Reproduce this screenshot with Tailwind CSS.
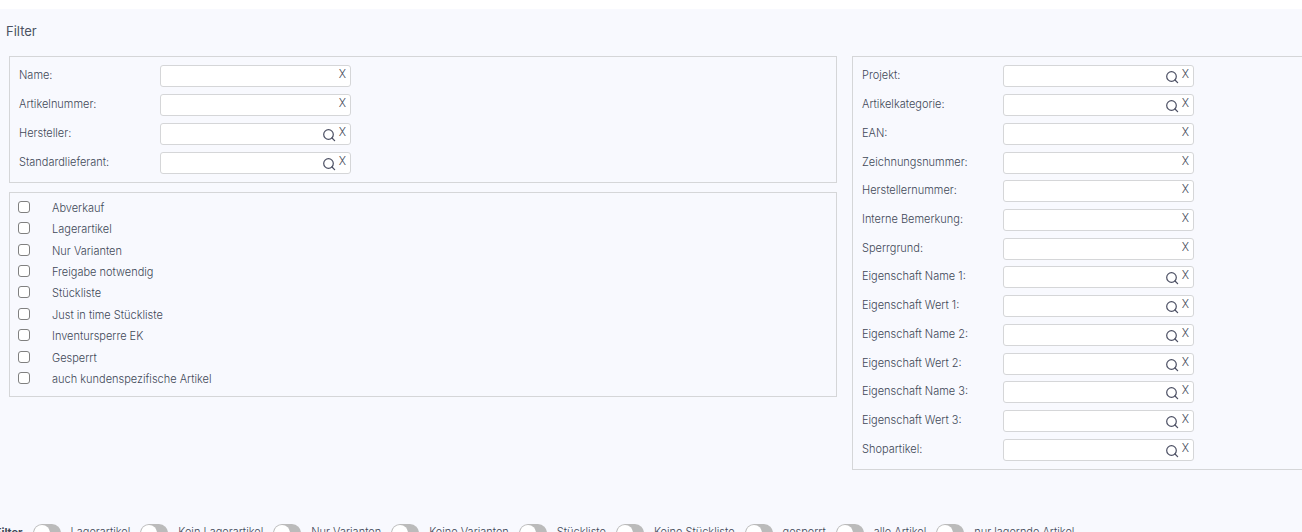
<!DOCTYPE html>
<html lang="de">
  <head>
    <meta charset="UTF-8" />
    <meta name="viewport" content="width=device-width, initial-scale=1.0" />
    <title>Filter</title>
    <script src="https://cdn.jsdelivr.net/npm/@tailwindcss/browser@4"></script>
  </head>
  <body class="h-screen overflow-hidden bg-white pt-[9px] font-['Inter',sans-serif] text-[11px] leading-4 font-light text-[#414857]">
    <svg class="hidden">
      <symbol id="search" viewBox="0 0 14 14">
        <circle cx="6.5" cy="6.5" r="4.8" fill="none" stroke="#4b4f63" stroke-width="1.2" />
        <path d="M10 10l2.6 2.6" fill="none" stroke="#4b4f63" stroke-width="1.3" stroke-linecap="round" />
      </symbol>
    </svg>

    <main class="min-h-full bg-[#f8f9fe]">
      <h1 class="px-[6px] pt-3 pb-[15px] text-[13px] leading-5 font-normal text-[#4b5362]">Filter</h1>

      <div class="flex items-start gap-[15px] pl-[9px]">
        <div class="flex grow flex-col gap-[9px]">
          <section id="leftFields" class="flex min-h-[127px] flex-col border border-[#d5d6d8] px-[9px] py-[5px]"></section>
          <section id="checks" class="flex min-h-[205px] flex-col border border-[#d5d6d8] px-2 pt-1 pb-[6px]"></section>
        </div>
        <section id="rightFields" class="flex min-h-[414px] w-[450px] shrink-0 flex-col border border-r-0 border-[#d5d6d8] px-[9px] py-[5px]"></section>
      </div>

      <div id="toggles" class="flex items-center gap-[10px] pt-[54px] whitespace-nowrap">
        <strong class="-ml-[5px] pb-[2px] font-bold">Filter</strong>
      </div>
    </main>

    <script>
      // [label, has search icon]
      const leftFields = [
        ["Name:", false],
        ["Artikelnummer:", false],
        ["Hersteller:", true],
        ["Standardlieferant:", true],
      ];
      const rightFields = [
        ["Projekt:", true],
        ["Artikelkategorie:", true],
        ["EAN:", false],
        ["Zeichnungsnummer:", false],
        ["Herstellernummer:", false],
        ["Interne Bemerkung:", false],
        ["Sperrgrund:", false],
        ["Eigenschaft Name 1:", true],
        ["Eigenschaft Wert 1:", true],
        ["Eigenschaft Name 2:", true],
        ["Eigenschaft Wert 2:", true],
        ["Eigenschaft Name 3:", true],
        ["Eigenschaft Wert 3:", true],
        ["Shopartikel:", true],
      ];
      const checks = [
        "Abverkauf",
        "Lagerartikel",
        "Nur Varianten",
        "Freigabe notwendig",
        "Stückliste",
        "Just in time Stückliste",
        "Inventursperre EK",
        "Gesperrt",
        "auch kundenspezifische Artikel",
      ];
      const toggles = [
        "Lagerartikel",
        "Kein Lagerartikel",
        "Nur Varianten",
        "Keine Varianten",
        "Stückliste",
        "Keine Stückliste",
        "gesperrt",
        "alle Artikel",
        "nur lagernde Artikel",
      ];

      function renderFields(id, fields) {
        document.querySelector("#" + id).innerHTML = fields
          .map(
            ([label, search], i) => `
            <div class="flex flex-1 items-center">
              <label for="${id}${i}" class="w-[141px] pb-[2px]">${label}</label>
              <div class="relative">
                <input id="${id}${i}" type="text" class="block h-[22px] w-[191px] rounded-[3px] border border-[#d5d6d8] bg-white pr-8 pl-1 outline-none" />
                <div class="absolute inset-y-0 right-[5px] flex items-start gap-[3px]">
                  ${search ? `<button type="button" aria-label="Suchen" class="pt-[5px]"><svg class="size-[14px]"><use href="#search" /></svg></button>` : ""}
                  <button type="button" class="pt-px" onclick="clearField('${id}${i}')">X</button>
                </div>
              </div>
            </div>`
          )
          .join("");
      }

      function clearField(id) {
        document.querySelector("#" + id).value = "";
      }

      renderFields("leftFields", leftFields);
      renderFields("rightFields", rightFields);

      document.querySelector("#checks").innerHTML = checks
        .map(
          (label, i) => `
          <div class="flex flex-1 items-center gap-[22px]">
            <input id="check${i}" type="checkbox" class="mb-[2px] size-3 appearance-none rounded-[3px] border border-[#808080] bg-white checked:bg-[#4b5362]" />
            <label for="check${i}">${label}</label>
          </div>`
        )
        .join("");

      document.querySelector("#toggles").innerHTML += toggles
        .map(
          (label, i) => `
          <div class="flex items-center gap-[10px]">
            <input id="toggle${i}" type="checkbox" role="switch" class="h-[18px] w-7 appearance-none rounded-full bg-[#bbbbbb] p-px before:block before:size-4 before:rounded-full before:bg-white checked:bg-[#4b5362] checked:before:ml-[10px]" />
            <label for="toggle${i}" class="pb-[2px]">${label}</label>
          </div>`
        )
        .join("");
    </script>
  </body>
</html>
